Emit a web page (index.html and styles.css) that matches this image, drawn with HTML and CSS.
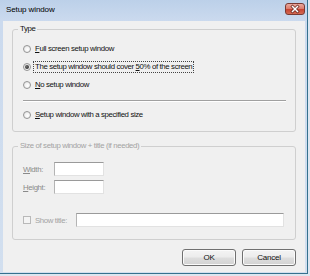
FILE: index.html
```html
<!DOCTYPE html>
<html>
<head>
<meta charset="utf-8">
<title>Setup window</title>
<link rel="stylesheet" href="styles.css">
</head>
<body>
<div class="window">
  <div class="frame">
    <div class="titlebar">
      <span class="title">Setup window</span>
      <span class="close">
        <svg width="20" height="12" viewBox="0 0 20 12">
          <path d="M7.5 3.5 L12.5 8.5 M12.5 3.5 L7.5 8.5" stroke="#6b2a22" stroke-width="3" stroke-linecap="square" fill="none"/>
          <path d="M7.5 3.5 L12.5 8.5 M12.5 3.5 L7.5 8.5" stroke="#ffffff" stroke-width="1.5" stroke-linecap="square" fill="none"/>
        </svg>
      </span>
    </div>
    <div class="client">
      <fieldset class="group type-group">
        <legend>Type</legend>
        <div class="radio"><span class="rb"></span><span class="rtext"><u>F</u>ull screen setup window</span></div>
        <div class="radio"><span class="rb checked"></span><span class="rtext focus">The setup window should cover <u>5</u>0% of the screen</span></div>
        <div class="radio"><span class="rb"></span><span class="rtext"><u>N</u>o setup window</span></div>
        <div class="sep"></div>
        <div class="radio"><span class="rb"></span><span class="rtext"><u>S</u>etup window with a specified size</span></div>
      </fieldset>
      <fieldset class="group size-group">
        <legend>Size of setup window + title (if needed)</legend>
        <div class="field"><span class="lbl"><u>W</u>idth:</span><span class="input small"></span></div>
        <div class="field"><span class="lbl"><u>H</u>eight:</span><span class="input small"></span></div>
        <div class="field showtitle"><span class="cb"></span><span class="lbl2">Show title:</span><span class="input wide"></span></div>
      </fieldset>
      <div class="buttons">
        <button class="btn">OK</button>
        <button class="btn">Cancel</button>
      </div>
    </div>
  </div>
</div>
</body>
</html>
```
FILE: styles.css
```css
* { box-sizing: border-box; }
html, body { margin: 0; padding: 0; }
body {
  width: 310px;
  height: 276px;
  overflow: hidden;
  background: #dde6f0;
  font-family: "Liberation Sans", Arial, sans-serif;
  font-size: 7.8px;
  letter-spacing: -0.36px;
  color: #111;
}
.window { width: 310px; height: 276px; background: #dde6f0; }
.frame {
  width: 308px;
  height: 274px;
  border-right: 1px solid #35718e;
  border-bottom: 1px solid #35718e;
  background: linear-gradient(#bcd0e9 0, #cbdaee 21px, #d2dfef 100%);
  display: flex;
  flex-direction: column;
}
.titlebar {
  height: 21px;
  flex: none;
  display: flex;
  align-items: flex-start;
  justify-content: space-between;
  padding: 0 2px 0 6px;
}
.title {
  padding-top: 5px;
  line-height: 10px;
  font-size: 8px;
  letter-spacing: -0.1px;
  color: #000;
}
.close {
  margin-top: 3px;
  width: 20px;
  height: 12px;
  border: 1px solid #7a3a33;
  border-radius: 3px;
  background: linear-gradient(#eaa99e 0%, #dd7d6e 45%, #c84533 55%, #d36a52 100%);
  display: flex;
}
.close svg { margin: -1px; }
.client {
  margin: 0 2px 0 3px;
  width: 302px;
  height: 251px;
  flex: none;
  background: #f0f0f0;
  padding: 3px 9px 0 9px;
}
.group {
  margin: 0;
  min-width: 0;
  border: 1px solid #cfcfcf;
  border-radius: 3px;
}
.group legend {
  padding: 0 2px;
  margin-left: -5px;
  line-height: 10px;
}
.type-group { padding: 6px 9px 7px 10px; }
.radio {
  display: flex;
  align-items: center;
  height: 18px;
  gap: 3px;
}
.rb {
  width: 8px;
  height: 8px;
  border-radius: 50%;
  border: 1px solid #959595;
  background: radial-gradient(circle at 60% 60%, #ffffff 0, #f4f4f4 40%, #dcdcdc 100%);
  display: flex;
  align-items: center;
  justify-content: center;
  flex: none;
}
.rb.checked::after {
  content: "";
  width: 4px;
  height: 4px;
  border-radius: 50%;
  background: radial-gradient(circle at 40% 40%, #6f6f6f, #1a1a1a);
}
.rtext { padding: 0 1px; line-height: 10px; }
.focus { outline: 1px dotted #444; outline-offset: 0; }
.sep {
  height: 2px;
  margin: 6px 0 4px 0;
  border-top: 1px solid #a0a0a0;
  border-bottom: 1px solid #ffffff;
}
.size-group {
  margin-top: 9px;
  padding: 11px 9px 12px 10px;
  display: flex;
  flex-direction: column;
  gap: 4px;
}
.size-group legend { color: #a3a3a3; }
.field {
  display: flex;
  align-items: center;
  height: 14px;
}
.lbl { width: 31px; color: #8a8a8a; }
.lbl2 { width: 41px; color: #a3a3a3; }
.input {
  height: 14px;
  background: #fff;
  border: 1px solid #e2e2e2;
  border-top-color: #9a9a9a;
  border-left-color: #b4b4b4;
}
.input.small { width: 50px; }
.input.wide { width: 208px; }
.showtitle { margin-top: 15px; }
.cb {
  width: 8px;
  height: 8px;
  margin-right: 4px;
  border: 1px solid #b9b9b9;
  background: #f4f4f4;
  flex: none;
}
.buttons {
  margin-top: 9px;
  display: flex;
  justify-content: flex-end;
  gap: 6px;
}
.btn {
  width: 54px;
  height: 17px;
  margin: 0;
  padding: 0;
  border: 1px solid #707070;
  border-radius: 3px;
  background: linear-gradient(#f4f4f4 0%, #ececec 48%, #dedede 52%, #d2d2d2 100%);
  box-shadow: inset 0 0 0 1px #fbfbfb;
  font-family: "Liberation Sans", Arial, sans-serif;
  font-size: 8px;
  letter-spacing: -0.2px;
  color: #111;
}
```
